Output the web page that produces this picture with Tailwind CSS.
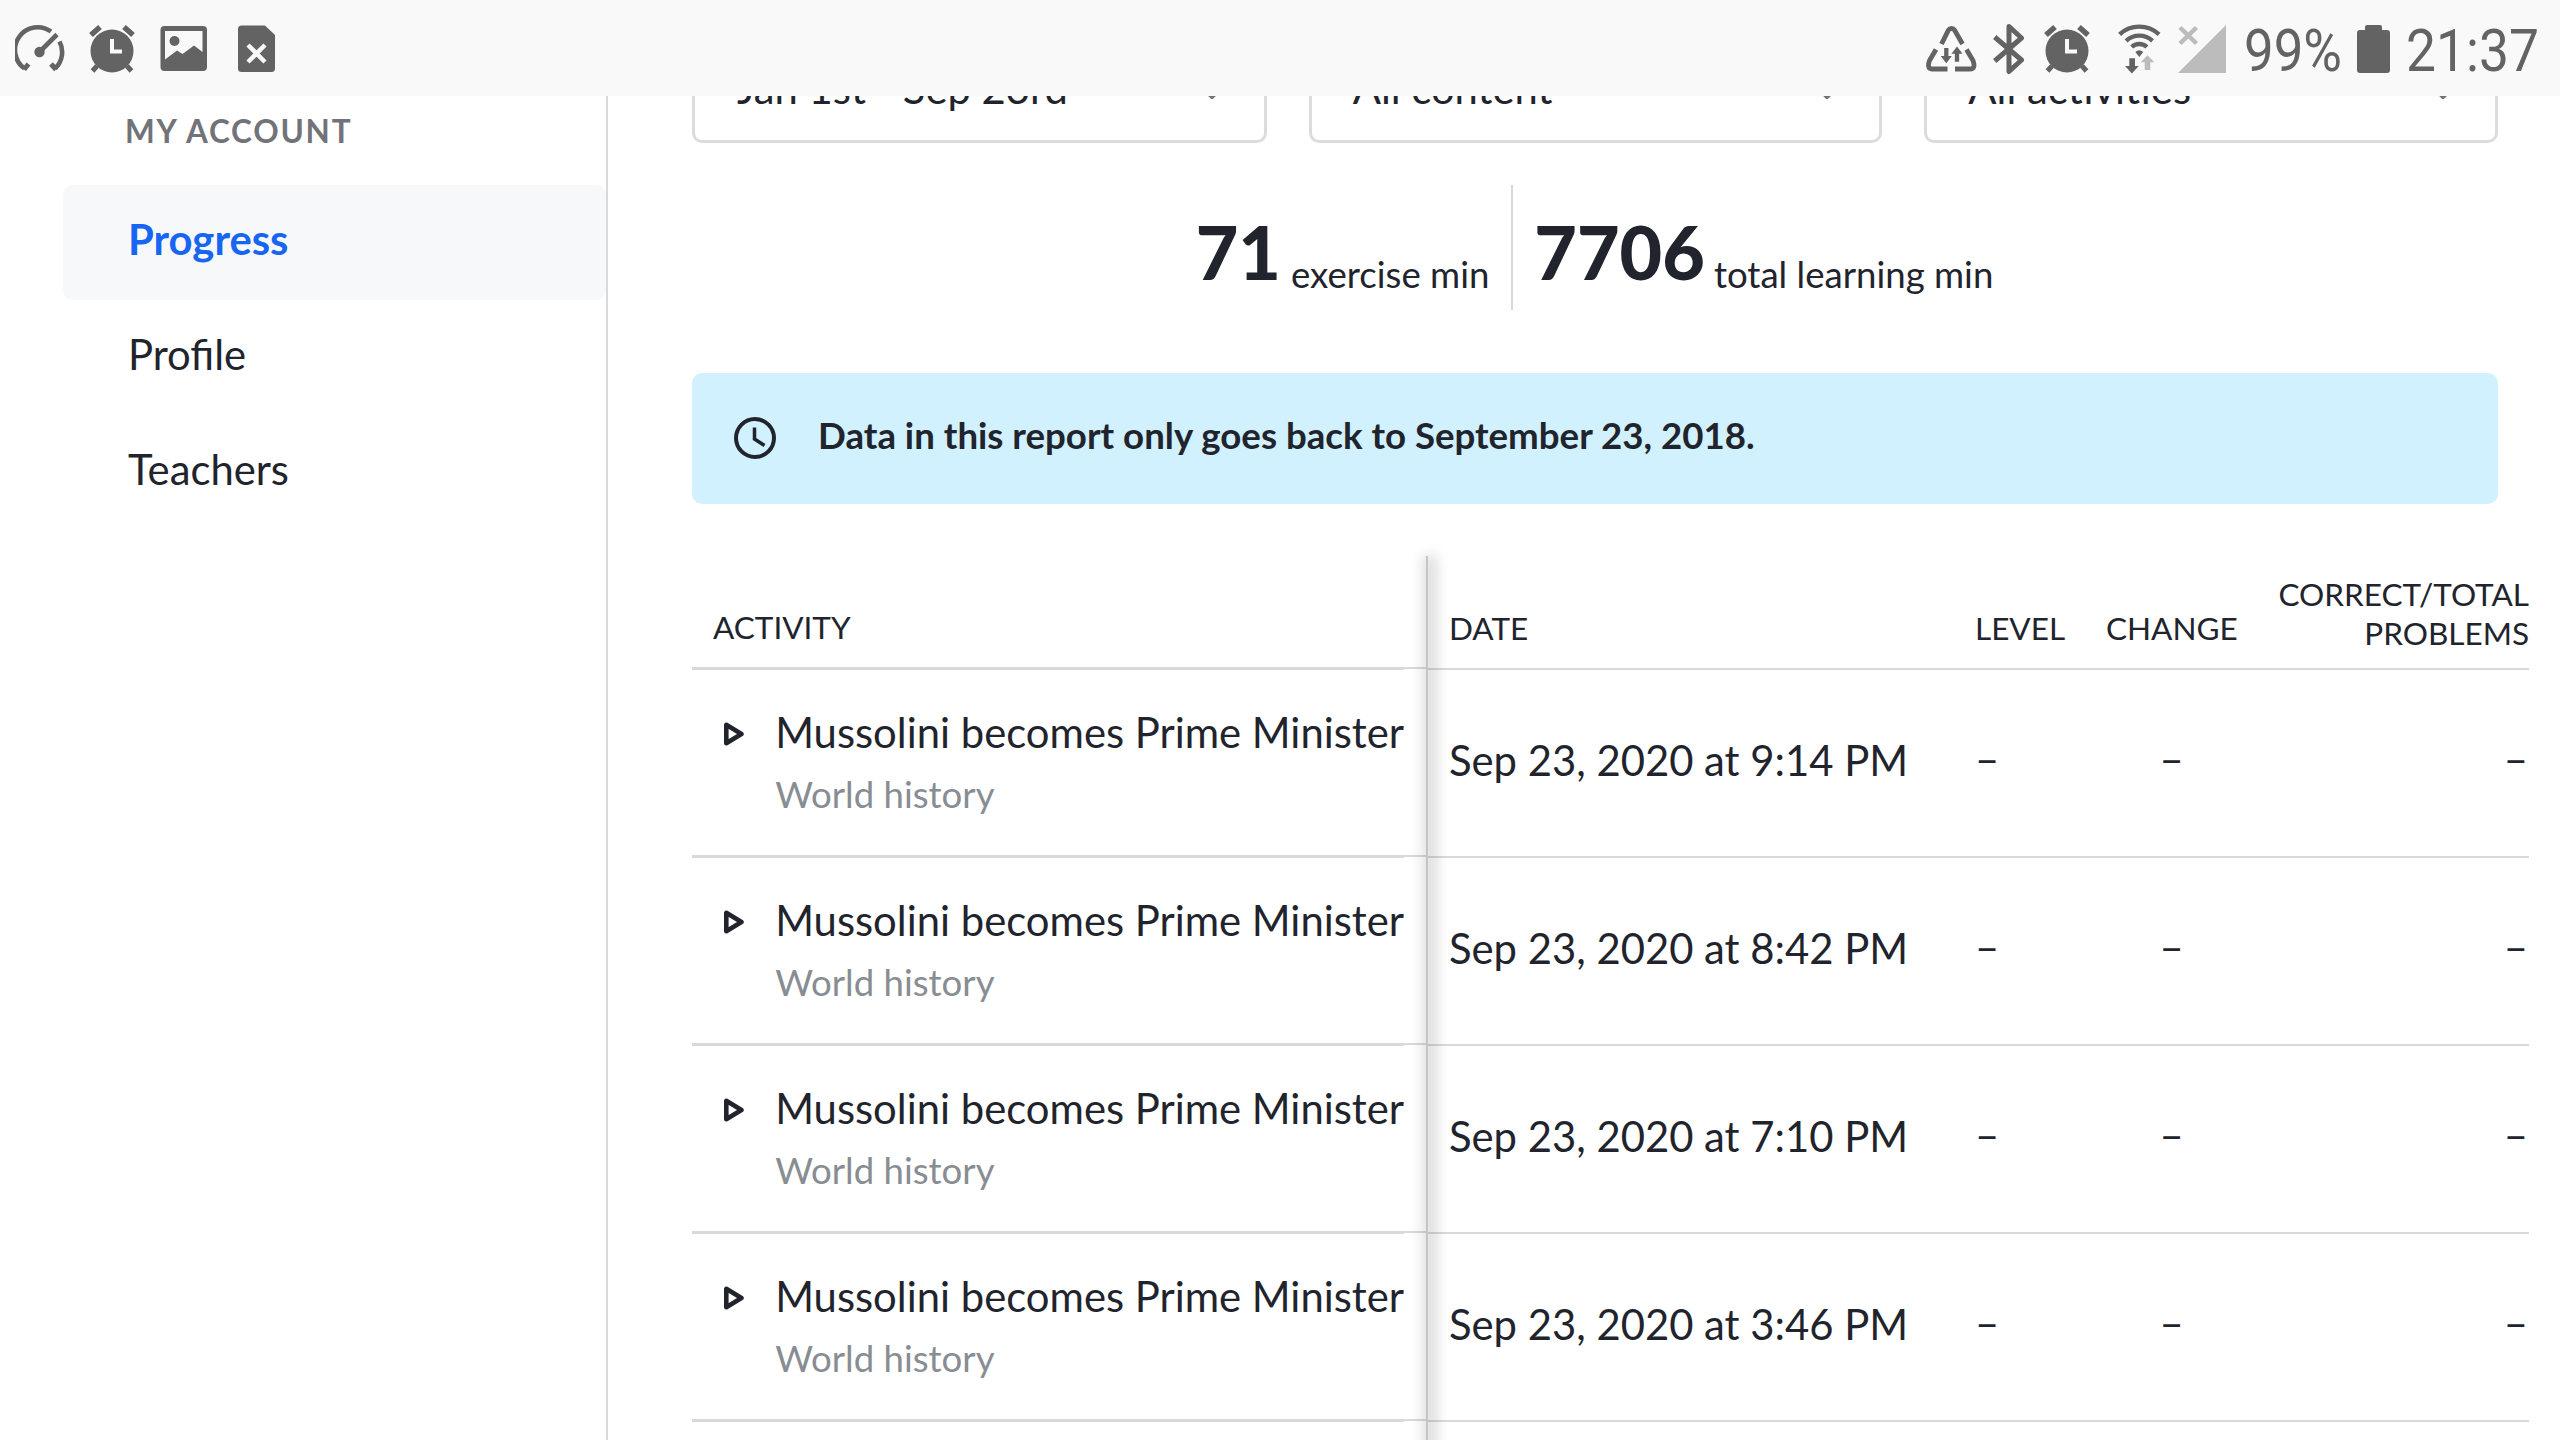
<!DOCTYPE html>
<html lang="en">
<head>
<meta charset="utf-8">
<title>Progress</title>
<script src="https://cdn.jsdelivr.net/npm/@tailwindcss/browser@4"></script>
</head>
<body class="w-[2560px] h-[1440px] overflow-hidden bg-white font-['Lato',sans-serif] text-[41.8px] text-[#21242c] flex flex-col">

<header class="relative z-20 h-24 shrink-0 bg-[#f9f9f9] text-[#636363] flex items-center justify-between pl-[15px] pr-[20px]">
  <div class="flex items-center">
    <svg class="w-[50px] h-[60px] mr-[24px]" viewBox="0 0 50 60" fill="none" stroke="currentColor" stroke-width="4.6">
      <path d="M9.500 50.500A22.500 22.500 0 0 1 36 13.500M44.500 23.500A22.500 22.500 0 0 1 40 50.500"/>
      <path d="M13.500 46L9 51.500M36 46L41 51.500" stroke-width="5"/>
      <path d="M25 33.500L42 16.500" stroke-width="4.600"/><circle cx="24.500" cy="34" r="5.200" fill="currentColor" stroke="none"/>
    </svg>
    <svg class="w-[46px] h-[60px] mr-[25px]" viewBox="0 0 46 60" fill="none" stroke="currentColor">
      <circle cx="23" cy="33" r="21.500" fill="currentColor" stroke="none"/>
      <path d="M2 17L11 9M44 17L35 9" stroke-width="5.500"/><path d="M8 48L3.500 53M38 48L42.500 53" stroke-width="5"/>
      <path d="M23 21V33.500H33" stroke="#f9f9f9" stroke-width="4"/>
    </svg>
    <svg class="w-[48px] h-[60px] mr-[30px]" viewBox="0 0 48 60">
      <rect x="0.500" y="8" width="46.500" height="45" rx="4" fill="currentColor"/>
      <path d="M5 13H42.500V34L34 27.500L22.500 36L17 32.500L5 41.500Z" fill="#f9f9f9"/><circle cx="14.500" cy="23" r="5" fill="currentColor"/>
    </svg>
    <svg class="w-[38px] h-[60px]" viewBox="0 0 38 60">
      <path d="M3.500 7.500H27L37 17V50.500Q37 54 33.500 54H3.500Q0 54 0 50.500V11Q0 7.500 3.500 7.500Z" fill="currentColor"/>
      <path d="M10 27L27 44M27 27L10 44" stroke="#f9f9f9" stroke-width="4.500"/>
    </svg>
  </div>
  <div class="flex items-center">
    <svg class="w-[52px] h-[60px] mr-[15px]" viewBox="0 0 52 60" fill="none" stroke="currentColor" stroke-width="4.800">
      <path d="M15.500 26L22.500 12Q23.500 10.500 25.500 10.500Q27.500 10.500 28.500 12L36.500 26M10 31.500L3.500 42.500Q0.500 51 6.500 51H21.500M40.500 31.500L47 42.500Q50 51 44 51H29"/>
      <path d="M20.300 30V39M31 43.800V35" stroke-width="4.300"/><path d="M14.700 38H25.800L20.300 45.300ZM25.500 35.800H36.500L31 28.600Z" fill="currentColor" stroke="none"/>
    </svg>
    <svg class="w-[32px] h-[60px] mr-[19px]" viewBox="0 0 32 60" fill="none" stroke="currentColor" stroke-width="5" stroke-linejoin="round">
      <path d="M1.700 19L28.500 42L16 53.500V8.500L28.500 20L1.700 43"/>
    </svg>
    <svg class="w-[46px] h-[60px] mr-[28px]" viewBox="0 0 46 60" fill="none" stroke="currentColor">
      <circle cx="23" cy="33" r="21.500" fill="currentColor" stroke="none"/>
      <path d="M2 17L11 9M44 17L35 9" stroke-width="5.500"/><path d="M8 48L3.500 53M38 48L42.500 53" stroke-width="5"/>
      <path d="M23 21V33.500H33" stroke="#f9f9f9" stroke-width="4"/>
    </svg>
    <svg class="w-[44px] h-[60px] mr-[16px]" viewBox="0 0 44 60" fill="none" stroke="currentColor" stroke-width="4.400">
      <path d="M1.600 16.300A29 29 0 0 1 41 16.300M8.100 22.800A19.500 19.500 0 0 1 34.500 22.800M13.700 29A11 11 0 0 1 28.900 29"/>
      <path d="M17.300 34Q21.300 30.500 25.300 34L21.300 39ZM11.300 40.300H17V48H20.700L13.900 55.500L7 48H11.300Z" fill="currentColor" stroke="none"/>
      <path d="M29.500 37.300L36.300 44.300H32.300V52H26.700V44.300H22.700Z" fill="#bcbcbc" stroke="none"/>
    </svg>
    <svg class="w-[49px] h-[60px] mr-[17px] text-[#bcbcbc]" viewBox="0 0 49 60">
      <path d="M48 7V55H0Z" fill="currentColor"/><path d="M2 9.500L18.500 25.500M18.500 9.500L2 25.500" stroke="currentColor" stroke-width="4.500"/>
    </svg>
    <span class="w-[98px] pt-[6px] font-['Roboto'] text-[60px] leading-none"><span class="inline-block origin-left scale-x-[0.88]">99%</span></span>
    <svg class="w-[33px] h-[60px] ml-[15px] mr-[16px]" viewBox="0 0 33 60"><path d="M10 7H23Q25 7 25 9V12H30Q33 12 33 15V52Q33 55 30 55H3Q0 55 0 52V15Q0 12 3 12H8V9Q8 7 10 7Z" fill="currentColor"/></svg>
    <span class="w-[134px] pt-[6px] font-['Roboto'] text-[60px] leading-none"><span class="inline-block origin-left scale-x-[0.89]">21:37</span></span>
  </div>
</header>

<div class="flex grow min-h-0">
  <nav class="w-[608px] shrink-0 border-r-2 border-[#d8d9db] pl-[63px]">
    <h2 class="h-[89px] pl-[62px] pt-[9px] text-[31.5px] leading-[52px] font-bold tracking-[1.8px] text-[#717378]">MY ACCOUNT</h2>
    <a class="flex items-center h-[115px] pl-[65px] pb-[6px] rounded-[10px] bg-[#f7f8fa] text-[#1865f2] font-bold">Progress</a>
    <a class="flex items-center h-[115px] pl-[65px] pb-[6px]">Profile</a>
    <a class="flex items-center h-[115px] pl-[65px] pb-[6px]">Teachers</a>
  </nav>

  <main class="grow min-w-0 pl-[84px]">
    <div class="flex gap-[42px] -mt-[58px] w-[1806px]">
      <div class="h-[105px] flex-1 border-3 border-[#dbdcdd] rounded-[10px] flex items-center justify-between pl-[42px] pr-[40px] pb-[4px]">Jan 1st - Sep 23rd<svg class="w-[24px] h-[14px] mt-[7px]" viewBox="0 0 24 14" fill="none" stroke="#717378" stroke-width="4"><path d="M2 2L12 12L22 2"/></svg></div>
      <div class="h-[105px] flex-1 border-3 border-[#dbdcdd] rounded-[10px] flex items-center justify-between pl-[41px] pr-[40px] pb-[4px]">All content<svg class="w-[24px] h-[14px] mt-[7px]" viewBox="0 0 24 14" fill="none" stroke="#717378" stroke-width="4"><path d="M2 2L12 12L22 2"/></svg></div>
      <div class="h-[105px] flex-1 border-3 border-[#dbdcdd] rounded-[10px] flex items-center justify-between pl-[41px] pr-[40px] pb-[4px]">All activities<svg class="w-[24px] h-[14px] mt-[7px]" viewBox="0 0 24 14" fill="none" stroke="#717378" stroke-width="4"><path d="M2 2L12 12L22 2"/></svg></div>
    </div>

    <div class="flex justify-center w-[1805px] h-[125px] mt-[42px] text-[36.6px]">
      <div class="flex pr-[22px] border-r-2 border-[#d8d9db]"><span class="text-[73.5px] font-black leading-[134px]">71</span><span class="ml-[10px] leading-[178px]">exercise min</span></div>
      <div class="flex pl-[21px]"><span class="text-[73.5px] font-black leading-[134px]">7706</span><span class="ml-[9px] leading-[178px]">total learning min</span></div>
    </div>

    <div class="mt-[63px] flex items-center w-[1806px] h-[131px] bg-[#d0f1fd] rounded-[10px] pl-[42px] text-[36.65px] font-bold">
      <svg class="w-[42px] h-[42px] mr-[42px] -mt-[2px]" viewBox="0 0 42 42" fill="none" stroke="currentColor" stroke-width="4"><circle cx="21" cy="21" r="19"/><path d="M20.500 10.500V22L30.500 28.500" stroke-width="3.500"/></svg>
      <span class="pb-[6px]">Data in this report only goes back to September 23, 2018.</span>
    </div>

    <div class="mt-[52px] flex w-[1837px]">
      <div id="activities" class="relative z-10 w-[736px] shrink-0">
        <div class="flex">
          <div class="w-[712px] h-[114px] pl-[21px] border-b-3 border-[#d8d9d9] text-[31.5px] leading-[142px]">ACTIVITY</div>
          <div class="w-[22px] h-[113px] border-b-2 border-[#d8d9d9]"></div>
        </div>
        <div class="absolute right-0 top-0 bottom-0 w-[2px] bg-[#c4c5c6] shadow-[3px_5px_13px_6px_rgba(0,0,0,0.14)]"></div>
      </div>
      <div id="results" class="grow">
        <div class="h-[114px] border-b-2 border-[#d8d9d9] grid grid-cols-[526px_131px_131px_1fr] pl-[21px] text-[31.5px] leading-[144px]">
          <span>DATE</span><span>LEVEL</span><span>CHANGE</span><span class="text-right leading-[39px] pt-[19px]">CORRECT/TOTAL<br>PROBLEMS</span>
        </div>
      </div>
    </div>
  </main>
</div>

<script>
const times = ["9:14", "8:42", "7:10", "3:46"];
const left = document.getElementById("activities"), right = document.getElementById("results");
for (const t of times) {
  left.insertAdjacentHTML("beforeend", `<div class="flex"><div class="w-[712px] h-[188px] pl-[32px] border-b-3 border-[#d8d9d9] flex">
    <svg class="w-[22px] h-[26px] mt-[51px] mr-[31px]" viewBox="0 0 22 26" fill="none" stroke="currentColor" stroke-width="5" stroke-linejoin="round"><path d="M2.500 3V23L19 13Z"/></svg>
    <div class="pt-[36px]"><div class="leading-[52px] whitespace-nowrap">Mussolini becomes Prime Minister</div><div class="mt-[10px] leading-[52px] text-[36.6px] text-[#888d93]">World history</div></div></div>
    <div class="w-[22px] h-[187px] border-b-2 border-[#d8d9d9]"></div></div>`);
  right.insertAdjacentHTML("beforeend", `<div class="h-[188px] border-b-2 border-[#d8d9d9] grid grid-cols-[526px_131px_131px_1fr] items-center pl-[21px] pb-[6px]">
    <span>Sep 23, 2020 at ${t} PM</span><span class="pb-[3px]">–</span><span class="pb-[3px] text-center">–</span><span class="pb-[3px] pr-[1px] text-right">–</span></div>`);
}
// the divider continues below the last visible row
left.insertAdjacentHTML("beforeend", `<div class="h-[60px]"></div>`);
</script>
</body>
</html>
